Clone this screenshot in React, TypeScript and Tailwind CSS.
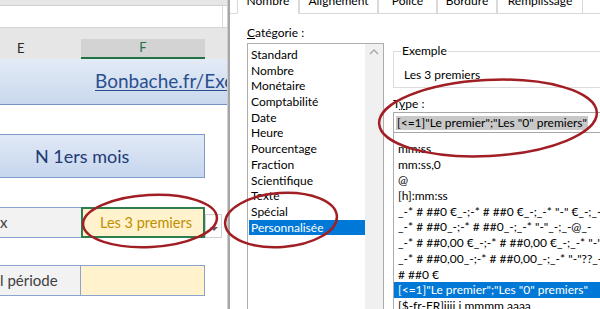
import React from "react";

const cats = [
  "Standard",
  "Nombre",
  "Monétaire",
  "Comptabilité",
  "Date",
  "Heure",
  "Pourcentage",
  "Fraction",
  "Scientifique",
  "Texte",
  "Spécial",
  "Personnalisée",
  "",
  "",
];

const formats = [
  "mm:ss",
  "mm:ss,0",
  "@",
  "[h]:mm:ss",
  '_-* # ##0 €_-;-* # ##0 €_-;_-* "-" €_-;_-@_-',
  '_-* # ##0_-;-* # ##0_-;_-* "-"_-;_-@_-',
  '_-* # ##0,00 €_-;-* # ##0,00 €_-;_-* "-"?? €_-;_-@_-',
  '_-* # ##0,00_-;-* # ##0,00_-;_-* "-"??_-;_-@_-',
  "# ##0 €",
  '[<=1]"Le premier";"Les "0" premiers"',
  "[$-fr-FR]jjjj j mmmm aaaa",
];

function Excel() {
  return (
    <div className="w-[227px] shrink-0 flex flex-col bg-white font-['Lato',sans-serif] overflow-hidden">
      <div className="h-[6px] bg-[#e6e6e6] border-b border-[#d0d0d0]" />
      <div className="h-[22px] bg-white border-b border-[#d4d4d4] flex">
        <div className="w-[223px] border-r border-[#dadada]" />
      </div>
      <div className="h-[31px] bg-[#e6e6e6] flex items-end">
        <div className="w-[81px] h-[20px] flex items-center pl-[17px] text-[13px] text-[#262626]">E</div>
        <div className="w-[124px] h-[20px] bg-[#d3d3d3] border-b-2 border-[#217346] flex items-center justify-center text-[13px] text-[#217346]">
          F
        </div>
      </div>
      <div className="h-[46px] bg-gradient-to-b from-[#e3ebf6] to-[#c9d8ee] border-b border-[#7290c2] flex items-center pl-[95px] whitespace-nowrap overflow-hidden">
        <span className="text-[19px] text-[#2a4f8f] underline decoration-1 underline-offset-2">Bonbache.fr/Excel</span>
      </div>
      <div className="h-[29px]" />
      <div className="h-[44px] w-[205px] bg-gradient-to-b from-[#e1e9f6] to-[#c6d6ee] border border-l-0 border-[#7f9bcb] flex items-center pl-[35px]">
        <span className="text-[18px] text-[#203a72]">N 1ers mois</span>
      </div>
      <div className="h-[29px]" />
      <div className="h-[31px] flex">
        <div className="w-[81px] bg-[#f2f2f2] border-y border-[#8aa3cf] flex items-center text-[15px] text-[#404040]">x</div>
        <div className="w-[124px] bg-[#fff2cc] border-2 border-[#2e7d4f] flex items-center justify-center pl-[6px] text-[14.5px] text-[#bf8f00] whitespace-nowrap">
          Les 3 premiers
        </div>
        <div className="w-[17px] h-[24px] self-end bg-white border border-[#d0d0d0] flex items-center justify-center">
          <div className="w-0 h-0 border-x-[4px] border-x-transparent border-t-[4px] border-t-[#606060] mt-[6px]" />
        </div>
      </div>
      <div className="h-[27px]" />
      <div className="h-[31px] flex">
        <div className="w-[81px] bg-[#f2f2f2] border border-l-0 border-[#8aa3cf] flex items-center text-[15px] text-[#404040] whitespace-nowrap">
          l période
        </div>
        <div className="w-[124px] bg-[#fff2cc] border border-l-0 border-[#8aa3cf]" />
      </div>
    </div>
  );
}

function Tab({ label, w, active }: { label: string; w: string; active?: boolean }) {
  return (
    <div
      className={
        "h-[14px] overflow-hidden flex justify-center bg-white border-x border-[#d9d9d9] " +
        w +
        (active ? " border-b border-b-white" : " border-b")
      }
    >
      <span className="mt-[-6px] leading-[14px] whitespace-nowrap">{label}</span>
    </div>
  );
}

function Dialog() {
  return (
    <div className="flex-1 flex flex-col bg-white font-['Lato',sans-serif] text-[12px] text-black overflow-hidden">
      <div className="flex">
        <div className="w-[7px] h-[14px] border-b border-[#d9d9d9]" />
        <Tab label="Nombre" w="w-[62px]" active />
        <Tab label="Alignement" w="w-[79px]" />
        <Tab label="Police" w="w-[59px]" />
        <Tab label="Bordure" w="w-[60px]" />
        <Tab label="Remplissage" w="w-[86px]" />
        <div className="flex-1 h-[14px] border-b border-[#d9d9d9]" />
      </div>
      <div className="flex flex-1">
        <div className="ml-[17px] w-[137px] flex flex-col">
          <div className="h-[29px] flex items-end leading-[14px] pb-[3px] whitespace-nowrap">
            <span>
              <span className="underline">C</span>atégorie :
            </span>
          </div>
          <div className="flex-1 border border-[#adadad] flex">
            <div className="flex-1 pt-[3px] pl-[1px]">
              {cats.map((c, i) => (
                <div
                  key={i}
                  className={
                    "h-[15.7px] leading-[15.7px] pl-[2px] whitespace-nowrap " +
                    (c === "Personnalisée" ? "bg-[#0078d7] text-white" : "")
                  }
                >
                  {c}
                </div>
              ))}
            </div>
            <div className="w-[18px] bg-[#f0f0f0] flex justify-center pt-[5px]">
              <svg width="10" height="6" viewBox="0 0 10 6">
                <path d="M1 5 L5 1 L9 5" fill="none" stroke="#a6a6a6" strokeWidth="1.3" />
              </svg>
            </div>
          </div>
        </div>
        <div className="ml-[9px] flex-1 flex flex-col min-w-0">
          <div className="h-[37px] shrink-0" />
          <div className="h-[37px] shrink-0 border border-r-0 border-[#dcdcdc] flex flex-col">
            <span className="mt-[-8px] ml-[7px] px-[1px] bg-white w-fit leading-[14px]">Exemple</span>
            <span className="mt-[10px] ml-[10px] leading-[14px] whitespace-nowrap">Les 3 premiers</span>
          </div>
          <div className="h-[24px] shrink-0 flex items-end pb-[1px] leading-[14px]">
            <span>
              T<span className="underline">y</span>pe :
            </span>
          </div>
          <div className="h-[21px] shrink-0 border border-r-0 border-[#a8a8a8] flex items-center pl-[2px]">
            <span className="bg-[#c8c8c8] leading-[14px] whitespace-nowrap px-[1px]">
              [&lt;=1]"Le premier";"Les "0" premiers"
            </span>
          </div>
          <div className="flex-1 border-l border-[#adadad] pt-[8px]">
            {formats.map((f, i) => (
              <div
                key={i}
                className={
                  "h-[15.7px] leading-[15.7px] pl-[4px] whitespace-nowrap " +
                  (i === 9 ? "bg-[#0078d7] text-white" : "")
                }
              >
                {f}
              </div>
            ))}
          </div>
        </div>
      </div>
    </div>
  );
}

export default function App() {
  return (
    <div className="w-[600px] h-[309px] overflow-hidden flex bg-white relative">
      <Excel />
      <div className="w-[3px] shrink-0 bg-[#a6a6a6] border-l border-[#cfcfcf]" />
      <Dialog />
      <svg className="absolute inset-0 pointer-events-none" width="600" height="309" viewBox="0 0 600 309">
        <g fill="none" stroke="#a11f24" strokeWidth="2.5">
          <ellipse cx="150" cy="221" rx="67" ry="26" transform="rotate(-3 150 221)" />
          <ellipse cx="281" cy="220" rx="56" ry="27" transform="rotate(-4 281 220)" />
          <ellipse cx="488" cy="118" rx="109" ry="38" transform="rotate(-3 488 118)" />
        </g>
      </svg>
    </div>
  );
}
